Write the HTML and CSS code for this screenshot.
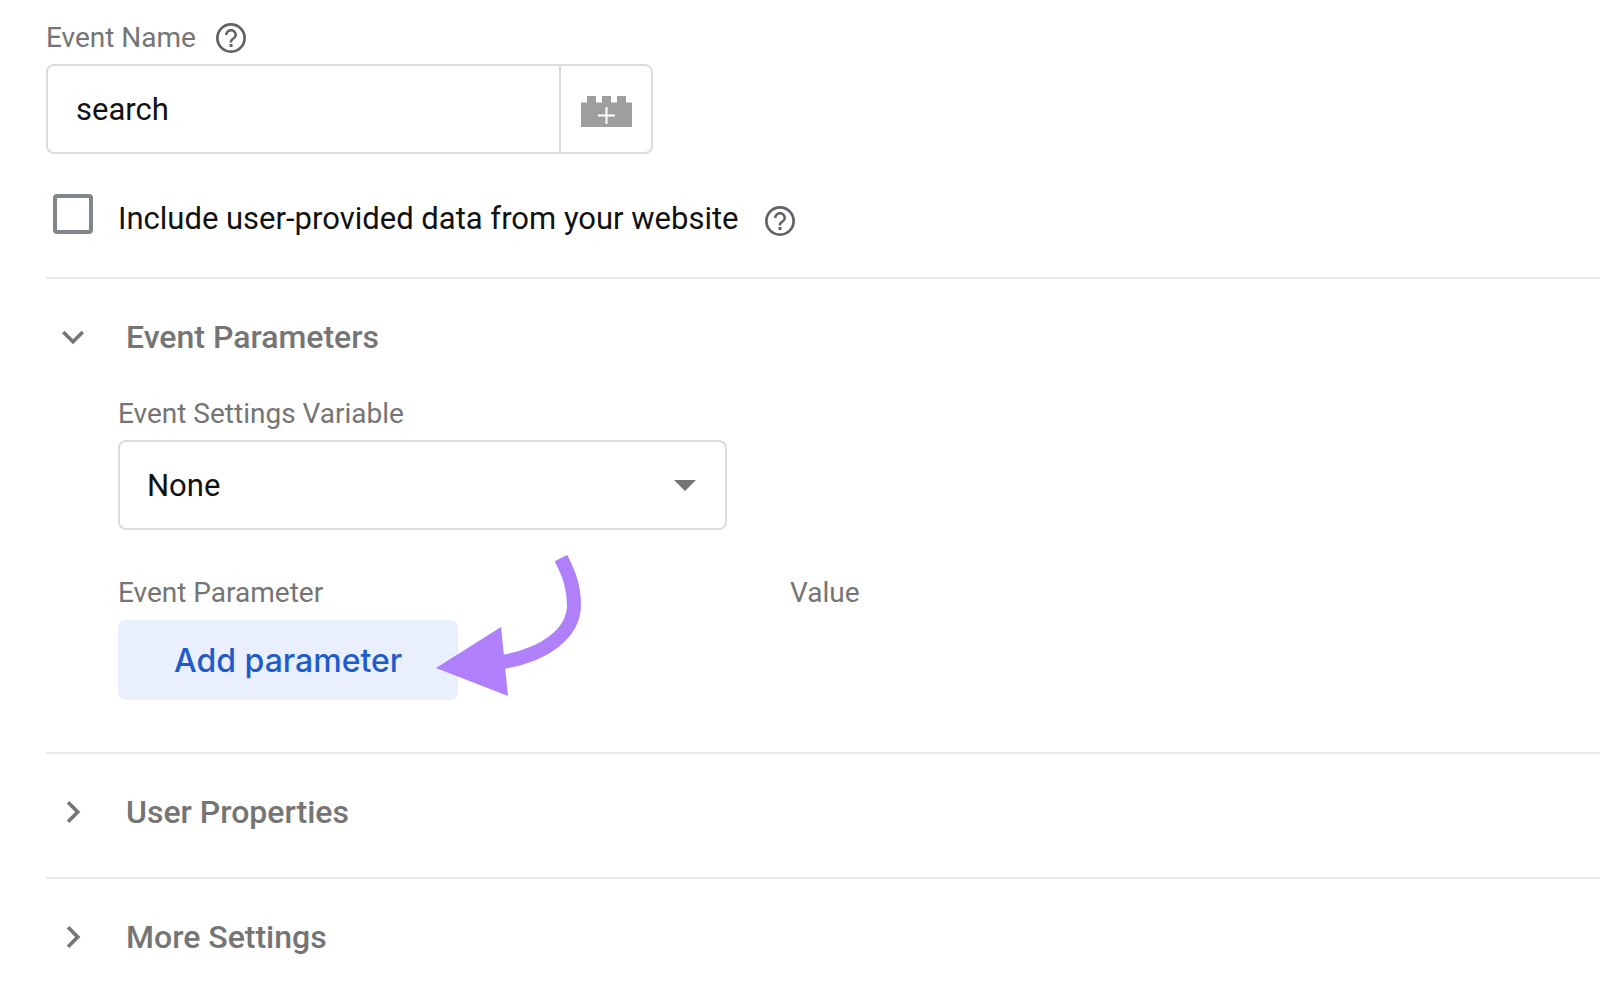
FILE: index.html
```html
<!DOCTYPE html>
<html lang="en">
<head>
    <meta charset="UTF-8">
    <meta name="viewport" content="width=device-width, initial-scale=1.0">
    <title>Event tag</title>
    <link rel="stylesheet" href="styles.css">
</head>
<body>
    <form class="tag-form">
        <div class="event-name">
            <div class="label-row">
                <label class="label" for="event-name">Event Name</label>
                <button type="button" class="help" aria-label="Help">
                    <svg viewBox="0 0 24 24"><circle cx="12" cy="12" r="9.100"/><path d="M11 18h2v-2h-2v2zM12 6c-2.210 0-4 1.790-4 4h1.700c0-1.270 1.030-2.300 2.300-2.300s2.300 1.030 2.300 2.300c0 2-3.200 1.750-3.200 5h1.700c0-2.250 3.200-2.500 3.200-5 0-2.210-1.790-4-4-4z"/></svg>
                </button>
            </div>
            <div class="input-group">
                <input type="text" id="event-name" class="input" value="search">
                <button type="button" class="variable" aria-label="Insert variable">
                    <svg viewBox="0 0 51 31">
                        <path class="brick" d="M0 6.500h6V0h9v6.500h6V0h9v6.500h6V0h9v6.500h6V31H0z"/>
                        <path class="plus" d="M25.500 11v17M17 19.500h17"/>
                    </svg>
                </button>
            </div>
        </div>

        <div class="check-row">
            <input type="checkbox" id="user-data" class="checkbox">
            <label class="check-label" for="user-data">Include user-provided data from your website</label>
            <button type="button" class="help" aria-label="Help">
                <svg viewBox="0 0 24 24"><circle cx="12" cy="12" r="9.100"/><path d="M11 18h2v-2h-2v2zM12 6c-2.210 0-4 1.790-4 4h1.700c0-1.270 1.030-2.300 2.300-2.300s2.300 1.030 2.300 2.300c0 2-3.200 1.750-3.200 5h1.700c0-2.250 3.200-2.500 3.200-5 0-2.210-1.790-4-4-4z"/></svg>
            </button>
        </div>

        <section class="section">
            <button type="button" class="section-toggle" aria-expanded="true">
                <svg viewBox="0 0 24 24"><path d="M7.410 8.590L12 13.170l4.590-4.580L18 10l-6 6-6-6z"/></svg>
                Event Parameters
            </button>
            <div class="section-body">
                <label class="label" for="settings-variable">Event Settings Variable</label>
                <div class="select-wrap">
                    <select id="settings-variable" class="select">
                        <option>None</option>
                    </select>
                    <svg class="caret" viewBox="0 0 22 11"><path d="M0 0h22L11 11z"/></svg>
                </div>
                <div class="params">
                    <div class="label">Event Parameter</div>
                    <div class="label">Value</div>
                </div>
                <div class="add-row">
                    <button type="button" class="add">Add parameter</button>
                    <svg class="arrow" viewBox="0 0 146 141">
                        <path class="arrow-line" d="M125 3C133 19 138 32 138 50C138 78 109 100 66 107"/>
                        <path class="arrow-head" d="M0 113L65 72L72 141z"/>
                    </svg>
                </div>
            </div>
        </section>

        <section class="section">
            <button type="button" class="section-toggle" aria-expanded="false">
                <svg viewBox="0 0 24 24"><path d="M8.590 16.590L13.170 12 8.590 7.410 10 6l6 6-6 6z"/></svg>
                User Properties
            </button>
        </section>

        <section class="section">
            <button type="button" class="section-toggle" aria-expanded="false">
                <svg viewBox="0 0 24 24"><path d="M8.590 16.590L13.170 12 8.590 7.410 10 6l6 6-6 6z"/></svg>
                More Settings
            </button>
        </section>
    </form>
</body>
</html>
```
FILE: styles.css
```css
* {
    box-sizing: border-box;
}
body {
    margin: 0;
    background: #fff;
    color: #111;
    font-family: Roboto, sans-serif;
    font-size: 31px;
}
button, input, select {
    margin: 0;
    font: inherit;
    color: inherit;
}
button {
    padding: 0;
    border: none;
    background: none;
    cursor: pointer;
}
svg {
    display: block;
}
.tag-form {
    padding: 20px 0 0 46px;
}
.label-row {
    display: flex;
    align-items: center;
    gap: 17px;
    margin-bottom: 8px;
}
.label {
    display: block;
    font-size: 28px;
    line-height: 36px;
    color: #757575;
}
.help svg {
    width: 36px;
    height: 36px;
    fill: #5f6368;
}
.help circle {
    fill: none;
    stroke: #5f6368;
    stroke-width: 1.8;
}
.input-group {
    display: flex;
    width: 100%;
    max-width: 607px;
    height: 90px;
    border: 2px solid #dadce0;
    border-radius: 8px;
}
.input {
    flex: 1;
    min-width: 0;
    padding: 0 28px;
    border: none;
    background: none;
    outline: none;
}
.variable {
    display: flex;
    align-items: center;
    justify-content: center;
    width: 92px;
    padding-top: 4px;
    border-left: 2px solid #dadce0;
}
.variable svg {
    width: 51px;
    height: 31px;
}
.brick { fill: #9e9e9e; }
.plus {
    stroke: #fff;
    stroke-width: 2;
}
.check-row {
    display: flex;
    align-items: flex-end;
    padding: 40px 0 38px 7px;
}
.checkbox {
    appearance: none;
    align-self: flex-start;
    width: 40px;
    height: 40px;
    margin-right: 25px;
    border: 4px solid #80868b;
    border-radius: 4px;
}
.checkbox:checked { background: #80868b; }
.check-label {
    margin-right: 23px;
    padding-top: 5px;
    line-height: 40px;
}
.section {
    padding: 36px 0 43px;
    border-top: 2px solid #e8eaed;
}
.section-toggle {
    display: flex;
    align-items: center;
    gap: 31px;
    padding-left: 5px;
    font-size: 32px;
    font-weight: 500;
    line-height: 44px;
    color: #757575;
}
.section-toggle svg {
    width: 44px;
    height: 44px;
    fill: #757575;
}
.section-body {
    padding: 37px 0 9px 72px;
}
.select-wrap {
    position: relative;
    width: 100%;
    max-width: 609px;
    margin-top: 8px;
}
.select {
    appearance: none;
    display: block;
    width: 100%;
    height: 90px;
    padding: 0 60px 0 27px;
    border: 2px solid #dadce0;
    border-radius: 8px;
    background: #fff;
}
.caret {
    position: absolute;
    top: 40px;
    right: 31px;
    width: 22px;
    height: 11px;
    fill: #757575;
    pointer-events: none;
}
.params {
    display: grid;
    grid-template-columns: 672px 1fr;
    margin: 45px 0 9px;
}
.add-row {
    position: relative;
}
.add {
    height: 80px;
    padding: 0 56px;
    border-radius: 8px;
    background: #e9effc;
    color: #1f5bcc;
    font-family: Inter, sans-serif;
    font-size: 32px;
    font-weight: 500;
}
/* pointer drawn over the button's right edge */
.arrow {
    position: absolute;
    top: -65px;
    left: 318px;
    width: 146px;
    height: 141px;
    pointer-events: none;
}
.arrow-line {
    fill: none;
    stroke: #b080fa;
    stroke-width: 14;
}
.arrow-head { fill: #b080fa; }
```
